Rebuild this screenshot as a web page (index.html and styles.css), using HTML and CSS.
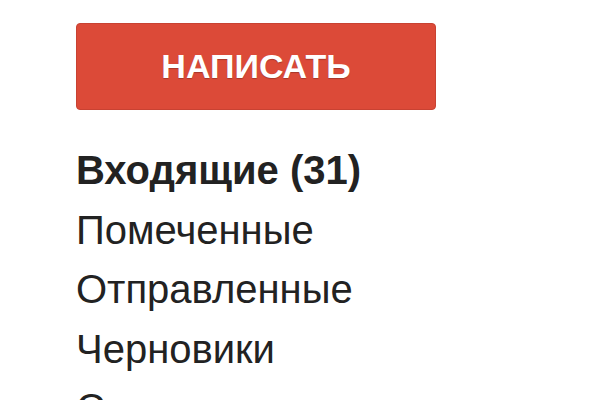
FILE: index.html
```html
<!DOCTYPE html>
<html lang="ru">
<head>
<meta charset="utf-8">
<link rel="stylesheet" href="styles.css">
</head>
<body>
<div class="sidebar">
  <div class="compose">НАПИСАТЬ</div>
  <ul class="nav">
    <li class="active">Входящие (31)</li>
    <li>Помеченные</li>
    <li>Отправленные</li>
    <li>Черновики</li>
    <li>Свернуть</li>
  </ul>
</div>
</body>
</html>
```
FILE: styles.css
```css
html, body {
  margin: 0;
  padding: 0;
  background: #fff;
  overflow: hidden;
}
body {
  width: 600px;
  height: 400px;
  font-family: "Liberation Sans", Arial, sans-serif;
}
.sidebar {
  padding: 23px 0 0 76px;
}
.compose {
  width: 360px;
  height: 87px;
  box-sizing: border-box;
  background: #dc4a38;
  border: 1px solid #c84232;
  border-radius: 4px;
  color: #fff;
  font-weight: bold;
  font-size: 34px;
  display: flex;
  align-items: center;
  justify-content: center;
  text-shadow: 0 1px 1px rgba(0,0,0,0.25);
}
.nav {
  list-style: none;
  margin: 31px 0 0 0;
  padding: 0;
}
.nav li {
  font-size: 40px;
  line-height: 59.5px;
  color: #222;
}
.nav li.active {
  font-weight: bold;
}
```
